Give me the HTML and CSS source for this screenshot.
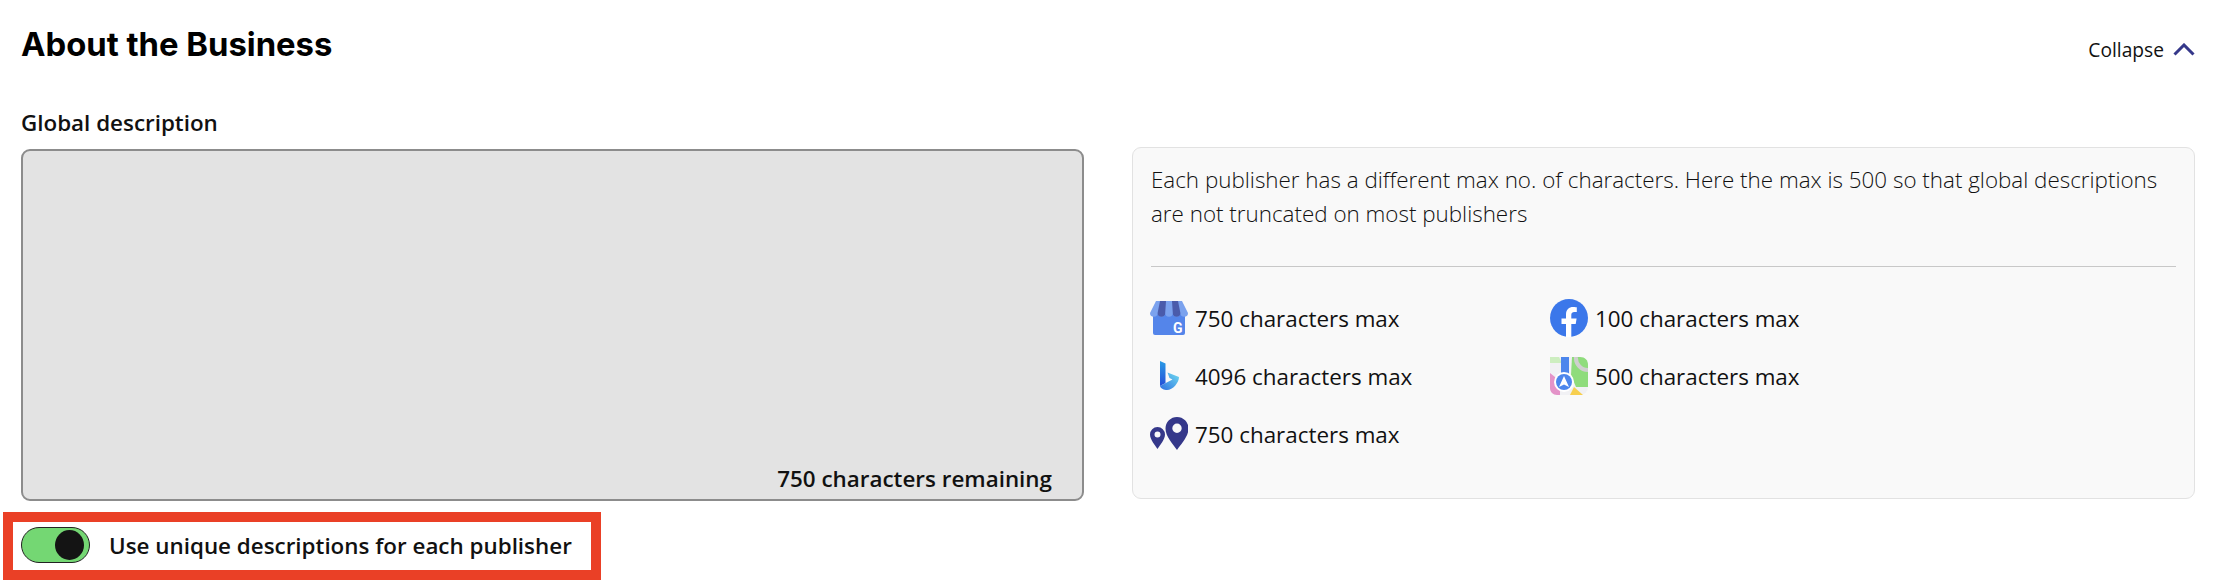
FILE: index.html
```html
<!DOCTYPE html>
<html lang="en">
<head>
    <meta charset="UTF-8">
    <title>About the Business</title>
    <link rel="stylesheet" href="styles.css">
</head>
<body>
    <div class="section">
        <div class="section-header">
            <h2 class="title">About the Business</h2>
            <button class="collapse">
                Collapse
                <svg class="chevron" viewBox="0 0 22 13" width="22" height="13">
                    <path d="M1.5 11.5 L11 2 L20.5 11.5" fill="none" stroke="#35388a" stroke-width="3"/>
                </svg>
            </button>
        </div>

        <div class="field-label">Global description</div>

        <div class="columns">
            <div class="description">
                <span class="remaining">750 characters remaining</span>
            </div>

            <div class="info">
                <p class="info-text">Each publisher has a different max no. of characters. Here the max is 500 so that global descriptions are not truncated on most publishers</p>
                <div class="publishers">
                    <div class="publisher">
                        <svg class="icon" viewBox="0 0 38 34">
                            <path d="M3 12H35V32a2 2 0 0 1-2 2H5a2 2 0 0 1-2-2Z" fill="#5485ea"/>
                            <path d="M6 0H32L38 12a3.8 3.8 0 0 1-7.6 0 3.8 3.8 0 0 1-7.6 0 3.8 3.8 0 0 1-7.6 0 3.8 3.8 0 0 1-7.6 0 3.8 3.8 0 0 1-7.6 0Z" fill="#7ba2ee"/>
                            <path d="M10 0H16L15.2 12a3.8 3.8 0 0 1-7.6 0Z" fill="#4a5bab"/>
                            <path d="M22 0H28L30.4 12a3.8 3.8 0 0 1-7.6 0Z" fill="#4a5bab"/>
                            <text class="gmb-g" x="23" y="32">G</text>
                        </svg>
                        <span>750 characters max</span>
                    </div>
                    <div class="publisher">
                        <svg class="icon" viewBox="0 0 38 38">
                            <circle cx="19" cy="19" r="19" fill="#3b77ea"/>
                            <path d="M16 38V25H11.5V19.5H16V15.5C16 10.5 19 8 23.2 8C25 8 26.8 8.3 26.8 8.3V13H24.4C22 13 21.3 14.4 21.3 16V19.5H26.6L25.7 25H21.3V38Z" fill="#fff"/>
                        </svg>
                        <span>100 characters max</span>
                    </div>
                    <div class="publisher">
                        <svg class="icon" viewBox="0 0 38 34">
                            <defs>
                                <linearGradient id="bingStem" x1="0" y1="0" x2="0" y2="1">
                                    <stop offset="0" stop-color="#2a9be6"/>
                                    <stop offset="1" stop-color="#2450d8"/>
                                </linearGradient>
                                <linearGradient id="bingWing" x1="0" y1="1" x2="1" y2="0">
                                    <stop offset="0" stop-color="#2f6fe0"/>
                                    <stop offset="1" stop-color="#6fdcf0"/>
                                </linearGradient>
                            </defs>
                            <path d="M17.5 13.5L29 18C29 24 22 32 16 31C12.5 30.5 10.5 29 10 27L22.5 20.5L19.5 19Z" fill="url(#bingWing)"/>
                            <path d="M10 2L15.5 4.5V24L10 27Z" fill="url(#bingStem)"/>
                        </svg>
                        <span>4096 characters max</span>
                    </div>
                    <div class="publisher">
                        <svg class="icon" viewBox="0 0 38 38">
                            <rect width="38" height="38" rx="8" fill="#f1f1f4"/>
                            <path d="M22 0H30C35 0 38 3 38 8V30H26L21 18Z" fill="#8fdc7c"/>
                            <path d="M26 0A12 12 0 0 0 38 13" fill="none" stroke="#cfcfcf" stroke-width="4"/>
                            <path d="M0 16L10 24L10 38H7C3 38 0 35 0 31Z" fill="#e493c8"/>
                            <path d="M20 38L24 30L33 38Z" fill="#f7cf4f"/>
                            <path d="M0 0H9L12 6H0Z" fill="#cdeec0"/>
                            <rect x="11" y="0" width="8" height="20" fill="#4c86ec"/>
                            <circle cx="14" cy="25" r="10" fill="#fff"/>
                            <circle cx="14" cy="25" r="8" fill="#4c86ec"/>
                            <path d="M14 19L19 30L14 27.5L9 30Z" fill="#fff"/>
                        </svg>
                        <span>500 characters max</span>
                    </div>
                    <div class="publisher">
                        <svg class="icon" viewBox="0 0 38 34">
                            <path fill-rule="evenodd" d="M7.5 10A7.5 7.5 0 0 1 15 17.5C15 22.5 10 28 7.5 32C5 28 0 22.5 0 17.5A7.5 7.5 0 0 1 7.5 10ZM7.5 14.5a3 3 0 1 0 0 6a3 3 0 1 0 0-6Z" fill="#35388a"/>
                            <path fill-rule="evenodd" d="M27 0A11.5 11.5 0 0 1 38.5 11.5C38.5 19.5 31 27 27 33C23 27 15.5 19.5 15.5 11.5A11.5 11.5 0 0 1 27 0ZM27 6.5a4.7 4.7 0 1 0 0 9.4a4.7 4.7 0 1 0 0-9.4Z" fill="#35388a"/>
                        </svg>
                        <span>750 characters max</span>
                    </div>
                </div>
            </div>
        </div>

        <div class="unique-row">
            <span class="toggle"><span class="knob"></span></span>
            <span class="toggle-label">Use unique descriptions for each publisher</span>
        </div>
    </div>
</body>
</html>
```

FILE: styles.css
```css
body {
    margin: 0;
    background-color: #fff;
    color: #111;
    font-family: "Open Sans", Arial, sans-serif;
}

.section {
    padding: 0 25px 0 21px;
}

.section-header {
    display: flex;
    justify-content: space-between;
    height: 107px;
    padding-top: 25px;
    box-sizing: border-box;
}

.title {
    margin: 0;
    font-family: Inter, Arial, sans-serif;
    font-size: 32.8px;
    line-height: 38px;
    font-weight: 700;
    color: #000;
}

.collapse {
    display: flex;
    align-items: center;
    align-self: flex-start;
    gap: 9px;
    height: 52px;
    padding: 0;
    margin-top: -2px;
    border: none;
    background: none;
    color: #111;
    font-family: inherit;
    font-size: 19.2px;
}

.field-label {
    font-size: 22.4px;
    line-height: 32px;
    font-weight: 600;
    height: 40px;
}

.columns {
    display: grid;
    grid-template-columns: 1063px 1063px;
    column-gap: 48px;
    align-items: start;
}

.description {
    display: flex;
    justify-content: flex-end;
    align-items: flex-end;
    height: 352px;
    margin-top: 2px;
    padding: 0 30px 5px 0;
    box-sizing: border-box;
    background-color: #e3e3e3;
    border: 2px solid #8c8c8c;
    border-radius: 9px;
}

.remaining {
    font-size: 22.4px;
    line-height: 30px;
    font-weight: 600;
}

.info {
    height: 352px;
    padding: 15px 18px 0;
    box-sizing: border-box;
    background-color: #f9f9f9;
    border: 1px solid #e2e2e2;
    border-radius: 9px;
}

.info-text {
    margin: 0;
    padding-bottom: 35px;
    border-bottom: 1px solid #c8c8c8;
    font-size: 22.4px;
    line-height: 34px;
    font-weight: 300;
    color: #111;
}

.publishers {
    display: grid;
    grid-template-columns: 400px 400px;
    grid-auto-rows: 58px;
    margin-top: 31px;
}

.publisher {
    display: flex;
    align-items: center;
    gap: 7px;
    height: 40px;
    font-size: 22.4px;
}

.icon {
    width: 38px;
    height: 38px;
    margin-left: -1px;
    flex-shrink: 0;
}

.gmb-g {
    font-family: Roboto, Arial, sans-serif;
    font-size: 14px;
    font-weight: 700;
    fill: #fff;
}

.unique-row {
    display: inline-flex;
    align-items: center;
    gap: 19px;
    margin: 11px 0 0 -18px;
    padding: 5px 19px 7px 8px;
    border: 10px solid #ea4026;
}

.toggle {
    display: flex;
    justify-content: flex-end;
    align-items: center;
    width: 69px;
    height: 36px;
    padding: 0 5px;
    box-sizing: border-box;
    background-color: #74d773;
    border: 1px solid #222;
    border-radius: 18px;
}

.knob {
    width: 29px;
    height: 30px;
    background-color: #141414;
    border-radius: 50%;
}

.toggle-label {
    font-size: 22.4px;
    font-weight: 600;
}
```
